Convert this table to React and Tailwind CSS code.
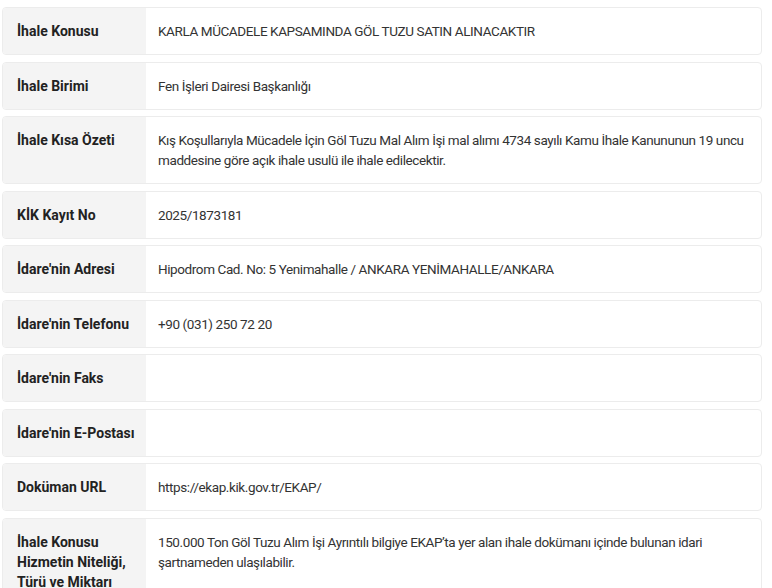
const rows = [
  { label: 'İhale Konusu', value: 'KARLA MÜCADELE KAPSAMINDA GÖL TUZU SATIN ALINACAKTIR' },
  { label: 'İhale Birimi', value: 'Fen İşleri Dairesi Başkanlığı' },
  {
    label: 'İhale Kısa Özeti',
    value:
      'Kış Koşullarıyla Mücadele İçin Göl Tuzu Mal Alım İşi mal alımı 4734 sayılı Kamu İhale Kanununun 19 uncu maddesine göre açık ihale usulü ile ihale edilecektir.',
  },
  { label: 'KİK Kayıt No', value: '2025/1873181' },
  { label: "İdare'nin Adresi", value: 'Hipodrom Cad. No: 5 Yenimahalle / ANKARA YENİMAHALLE/ANKARA' },
  { label: "İdare'nin Telefonu", value: '+90 (031) 250 72 20' },
  { label: "İdare'nin Faks", value: '' },
  { label: "İdare'nin E-Postası", value: '' },
  { label: 'Doküman URL', value: 'https://ekap.kik.gov.tr/EKAP/' },
  {
    label: 'İhale Konusu Hizmetin Niteliği, Türü ve Miktarı',
    value:
      '150.000 Ton Göl Tuzu Alım İşi Ayrıntılı bilgiye EKAP’ta yer alan ihale dokümanı içinde bulunan idari şartnameden ulaşılabilir.',
  },
];

export default function App() {
  return (
    <div className="min-h-screen bg-white font-['Roboto',sans-serif] leading-[20px]">
      <div className="flex flex-col gap-[6.5px] pt-[7px] pl-[2px] pr-[10px]">
        {rows.map((row) => (
          <div
            key={row.label}
            className="flex overflow-hidden rounded-[4px] border border-[#ececec] bg-white"
          >
            <div className="w-[143px] shrink-0 bg-[#f4f4f4] py-[13px] pl-[14px] pr-[6px] text-[14px] font-bold text-[#222]">
              {row.label}
            </div>
            <div className="flex-1 py-[13px] pl-[12px] pr-[12px] text-[13.5px] tracking-[-0.4px] text-[#333]">
              {row.value}
            </div>
          </div>
        ))}
      </div>
    </div>
  );
}
